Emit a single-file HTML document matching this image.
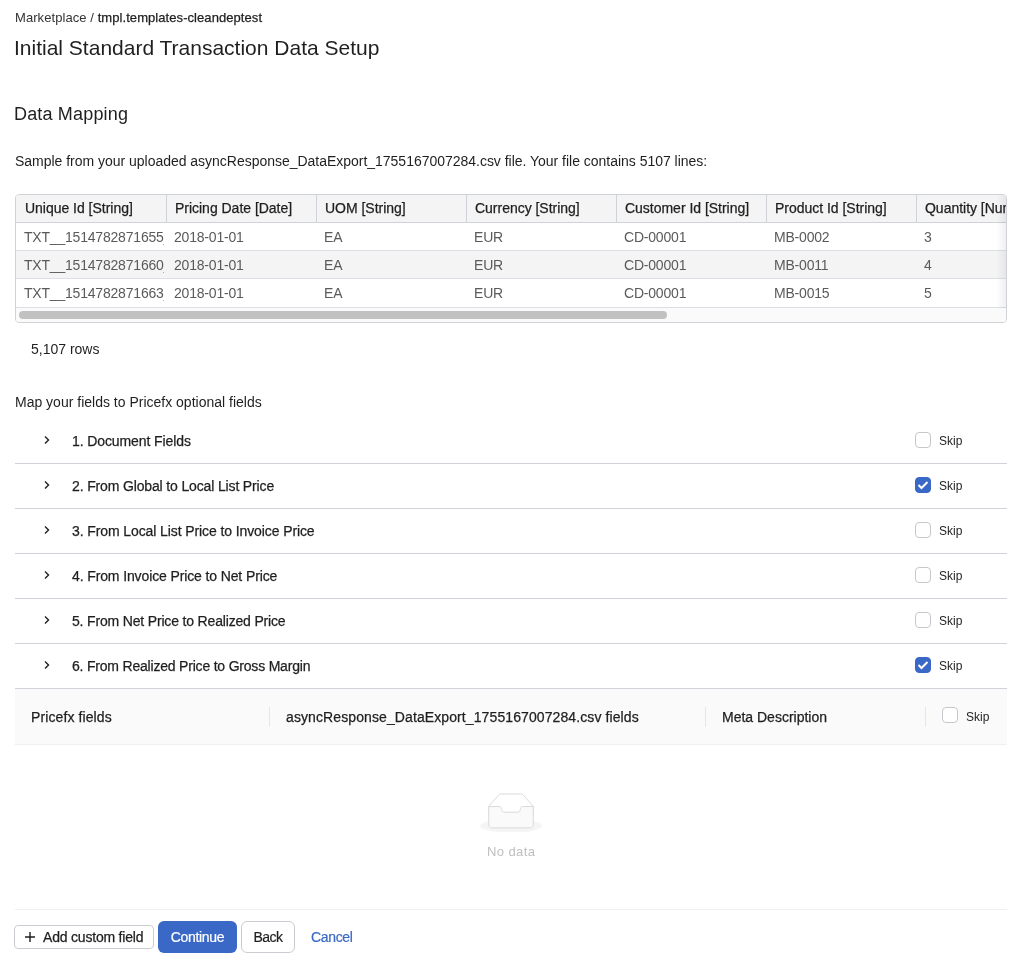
<!DOCTYPE html>
<html>
<head>
<meta charset="utf-8">
<style>
html,body{margin:0;padding:0;background:#fff;}
body{width:1033px;height:980px;position:relative;overflow:hidden;font-family:"Liberation Sans",sans-serif;color:#1f1f1f;}
.a{position:absolute;white-space:nowrap;}
.med{-webkit-text-stroke:0.25px currentColor;}
/* data table */
#dt{position:absolute;left:15px;top:194px;width:990px;height:127px;border:1px solid #cfd3d7;border-radius:4px;overflow:hidden;}
#dt .hd{position:absolute;left:0;top:0;width:990px;height:27px;background:#f4f4f4;border-bottom:1px solid #cfd3d7;}
#dt .row{position:absolute;left:0;width:990px;height:27px;border-bottom:1px solid #dcdfe3;}
#dt .cell{position:absolute;top:0;height:27px;overflow:hidden;white-space:nowrap;font-size:14px;line-height:27px;}
#dt .row .cell{top:1px;}
#dt .hd .cell{color:#1f1f1f;letter-spacing:-0.02px;}
#dt .row .cell{color:#5a5a5a;letter-spacing:-0.2px;}
#dt .vl{position:absolute;top:0;width:1px;height:27px;background:#cfd3d7;}
#dt .sb{position:absolute;left:0;top:113px;width:990px;height:14px;background:#fafafa;}
#dt .thumb{position:absolute;left:3px;top:3px;width:648px;height:8px;border-radius:4px;background:#c1c1c1;}
#dt .shadow{position:absolute;right:0;top:0;width:10px;height:113px;background:linear-gradient(to right,rgba(0,0,0,0),rgba(0,0,0,0.06));}
/* collapse */
.ci{position:absolute;left:15px;width:992px;height:44px;border-bottom:1px solid #cfd3d7;}
.ci .t{position:absolute;left:57px;top:0;line-height:44px;font-size:14px;letter-spacing:-0.1px;color:#1f1f1f;}
.ci .chev{position:absolute;left:28px;top:16px;}
.cb{position:absolute;width:14px;height:14px;border:1px solid #c4c8cc;border-radius:4px;background:#fff;}
.cb.on{background:#3a68c6;border-color:#3a68c6;}
.cb.on svg{position:absolute;left:1px;top:2px;}
.skip{position:absolute;font-size:12px;color:#1f1f1f;}
/* mapping table */
#mh{position:absolute;left:15px;top:689px;width:992px;height:55px;background:#fafafa;border-bottom:1px solid #f0f0f0;}
#mh .vl{position:absolute;top:18px;width:1px;height:20px;background:#e6e6e6;}
#mh .t{position:absolute;top:1px;line-height:55px;font-size:14px;color:#1f1f1f;}
.btn{position:absolute;box-sizing:border-box;border-radius:5px;font-size:14px;text-align:center;white-space:nowrap;}
</style>
</head>
<body>
<div id="wrap" style="position:absolute;left:0;top:0;width:1033px;height:980px;will-change:transform;">
<div class="a" style="left:15px;top:10px;font-size:13px;line-height:16px;letter-spacing:0.07px;"><span style="color:#333">Marketplace / </span><span class="med" style="color:#1f1f1f">tmpl.templates-cleandeptest</span></div>
<div class="a" style="left:14px;top:36px;font-size:21px;line-height:24px;color:#1f1f1f;">Initial Standard Transaction Data Setup</div>
<div class="a" style="left:14px;top:104px;font-size:18px;line-height:21px;color:#1f1f1f;letter-spacing:0.17px;">Data Mapping</div>
<div class="a" style="left:15px;top:153px;font-size:14px;line-height:17px;color:#1f1f1f;letter-spacing:-0.02px;">Sample from your uploaded asyncResponse_DataExport_1755167007284.csv file. Your file contains 5107 lines:</div>

<div id="dt">
  <div class="hd">
    <div class="cell med" style="left:9px;width:140px;">Unique Id [String]</div>
    <div class="vl" style="left:150px"></div>
    <div class="cell med" style="left:159px;width:140px;">Pricing Date [Date]</div>
    <div class="vl" style="left:300px"></div>
    <div class="cell med" style="left:309px;width:140px;">UOM [String]</div>
    <div class="vl" style="left:450px"></div>
    <div class="cell med" style="left:459px;width:140px;">Currency [String]</div>
    <div class="vl" style="left:600px"></div>
    <div class="cell med" style="left:609px;width:140px;">Customer Id [String]</div>
    <div class="vl" style="left:750px"></div>
    <div class="cell med" style="left:759px;width:140px;">Product Id [String]</div>
    <div class="vl" style="left:900px"></div>
    <div class="cell med" style="left:909px;width:81px;">Quantity [Number]</div>
  </div>
  <div class="row" style="top:28px;background:#fff;">
    <div class="cell" style="left:8px;width:140px;">TXT__1514782871655_6</div>
    <div class="cell" style="left:158px;width:140px;">2018-01-01</div>
    <div class="cell" style="left:308px;width:140px;">EA</div>
    <div class="cell" style="left:458px;width:140px;">EUR</div>
    <div class="cell" style="left:608px;width:140px;">CD-00001</div>
    <div class="cell" style="left:758px;width:140px;">MB-0002</div>
    <div class="cell" style="left:908px;width:81px;">3</div>
  </div>
  <div class="row" style="top:56px;background:#f4f4f4;">
    <div class="cell" style="left:8px;width:140px;">TXT__1514782871660_9</div>
    <div class="cell" style="left:158px;width:140px;">2018-01-01</div>
    <div class="cell" style="left:308px;width:140px;">EA</div>
    <div class="cell" style="left:458px;width:140px;">EUR</div>
    <div class="cell" style="left:608px;width:140px;">CD-00001</div>
    <div class="cell" style="left:758px;width:140px;">MB-0011</div>
    <div class="cell" style="left:908px;width:81px;">4</div>
  </div>
  <div class="row" style="top:84px;height:28px;background:#fff;">
    <div class="cell" style="left:8px;width:140px;">TXT__1514782871663_1</div>
    <div class="cell" style="left:158px;width:140px;">2018-01-01</div>
    <div class="cell" style="left:308px;width:140px;">EA</div>
    <div class="cell" style="left:458px;width:140px;">EUR</div>
    <div class="cell" style="left:608px;width:140px;">CD-00001</div>
    <div class="cell" style="left:758px;width:140px;">MB-0015</div>
    <div class="cell" style="left:908px;width:81px;">5</div>
  </div>
  <div class="shadow"></div>
  <div class="sb"><div class="thumb"></div></div>
</div>

<div class="a" style="left:31px;top:341px;font-size:14px;line-height:17px;color:#1f1f1f;">5,107 rows</div>
<div class="a" style="left:15px;top:394px;font-size:14px;line-height:17px;color:#1f1f1f;">Map your fields to Pricefx optional fields</div>

<!-- collapse items -->
<div class="ci" style="top:419px"><svg class="chev" width="8" height="10" viewBox="0 0 8 10"><path d="M2 1.5L5.5 5L2 8.5" fill="none" stroke="#1f1f1f" stroke-width="1.4"/></svg><div class="t med" style="letter-spacing:-0.1px">1. Document Fields</div><div class="cb" style="left:900px;top:13px;"></div><div class="skip" style="left:924px;top:15px;">Skip</div></div>
<div class="ci" style="top:464px"><svg class="chev" width="8" height="10" viewBox="0 0 8 10"><path d="M2 1.5L5.5 5L2 8.5" fill="none" stroke="#1f1f1f" stroke-width="1.4"/></svg><div class="t med" style="letter-spacing:-0.145px">2. From Global to Local List Price</div><div class="cb on" style="left:900px;top:13px;"><svg width="12" height="10" viewBox="0 0 12 10"><path d="M1.5 5L4.5 8L10.5 2" fill="none" stroke="#fff" stroke-width="2"/></svg></div><div class="skip" style="left:924px;top:15px;">Skip</div></div>
<div class="ci" style="top:509px"><svg class="chev" width="8" height="10" viewBox="0 0 8 10"><path d="M2 1.5L5.5 5L2 8.5" fill="none" stroke="#1f1f1f" stroke-width="1.4"/></svg><div class="t med" style="letter-spacing:-0.1px">3. From Local List Price to Invoice Price</div><div class="cb" style="left:900px;top:13px;"></div><div class="skip" style="left:924px;top:15px;">Skip</div></div>
<div class="ci" style="top:554px"><svg class="chev" width="8" height="10" viewBox="0 0 8 10"><path d="M2 1.5L5.5 5L2 8.5" fill="none" stroke="#1f1f1f" stroke-width="1.4"/></svg><div class="t med" style="letter-spacing:-0.12px">4. From Invoice Price to Net Price</div><div class="cb" style="left:900px;top:13px;"></div><div class="skip" style="left:924px;top:15px;">Skip</div></div>
<div class="ci" style="top:599px"><svg class="chev" width="8" height="10" viewBox="0 0 8 10"><path d="M2 1.5L5.5 5L2 8.5" fill="none" stroke="#1f1f1f" stroke-width="1.4"/></svg><div class="t med" style="letter-spacing:-0.17px">5. From Net Price to Realized Price</div><div class="cb" style="left:900px;top:13px;"></div><div class="skip" style="left:924px;top:15px;">Skip</div></div>
<div class="ci" style="top:644px"><svg class="chev" width="8" height="10" viewBox="0 0 8 10"><path d="M2 1.5L5.5 5L2 8.5" fill="none" stroke="#1f1f1f" stroke-width="1.4"/></svg><div class="t med" style="letter-spacing:-0.2px">6. From Realized Price to Gross Margin</div><div class="cb on" style="left:900px;top:13px;"><svg width="12" height="10" viewBox="0 0 12 10"><path d="M1.5 5L4.5 8L10.5 2" fill="none" stroke="#fff" stroke-width="2"/></svg></div><div class="skip" style="left:924px;top:15px;">Skip</div></div>


<div id="mh">
  <div class="t med" style="left:16px;letter-spacing:0.1px;">Pricefx fields</div>
  <div class="vl" style="left:254px"></div>
  <div class="t med" style="left:271px;letter-spacing:0.1px;">asyncResponse_DataExport_1755167007284.csv fields</div>
  <div class="vl" style="left:690px"></div>
  <div class="t med" style="left:707px;">Meta Description</div>
  <div class="vl" style="left:910px"></div>
  <div class="cb" style="left:927px;top:18px;"></div>
  <div class="skip" style="left:951px;top:21px;">Skip</div>
</div>

<svg style="position:absolute;left:480px;top:792.5px;" width="62" height="39.7" viewBox="0 0 64 41"><g transform="translate(0 1)" fill="none" fill-rule="evenodd"><ellipse fill="#f5f5f5" cx="32" cy="33" rx="32" ry="7"/><g fill-rule="nonzero" stroke="#d9d9d9"><path d="M55 12.76L44.854 1.258C44.367.474 43.656 0 42.907 0H21.093c-.749 0-1.46.474-1.947 1.257L9 12.761V22h46v-9.24z"/><path d="M41.613 15.931c0-1.605.994-2.93 2.227-2.931H55v18.137C55 33.26 53.68 35 52.050 35h-40.1C10.32 35 9 33.259 9 31.137V13h11.16c1.233 0 2.227 1.323 2.227 2.928v.022c0 1.605 1.005 2.901 2.237 2.901h14.752c1.232 0 2.237-1.308 2.237-2.913v-.007z" fill="#fafafa"/></g></g></svg>
<div class="a" style="left:487px;top:844px;font-size:13px;line-height:16px;color:#bfbfbf;letter-spacing:0.4px;">No data</div>

<div class="a" style="left:15px;top:909px;width:992px;height:1px;background:#f0f0f0;"></div>

<div class="btn" style="left:14px;top:925px;width:140px;height:24px;border:1px solid #c9ccd1;background:#fff;color:#1f1f1f;border-radius:4px;">
  <svg style="position:absolute;left:10px;top:6px;" width="10" height="10" viewBox="0 0 10 10"><path d="M5 0V10M0 5H10" stroke="#1f1f1f" stroke-width="1.4"/></svg>
  <span class="a med" style="left:28px;top:3px;line-height:16px;letter-spacing:-0.2px;">Add custom field</span>
</div>
<div class="btn" style="left:158px;top:921px;width:79px;height:32px;background:#3a68c6;color:#fff;line-height:32px;letter-spacing:-0.3px;border-radius:6px;-webkit-text-stroke:0.2px #fff;">Continue</div>
<div class="btn" style="left:241px;top:921px;width:54px;height:32px;border:1px solid #c9ccd1;background:#fff;color:#1f1f1f;line-height:30px;letter-spacing:-0.55px;border-radius:6px;-webkit-text-stroke:0.2px #1f1f1f;">Back</div>
<div class="a" style="left:311px;top:929px;font-size:14px;line-height:16px;color:#3a68c6;letter-spacing:-0.35px;-webkit-text-stroke:0.2px #3a68c6;">Cancel</div>

</div>
</body>
</html>
